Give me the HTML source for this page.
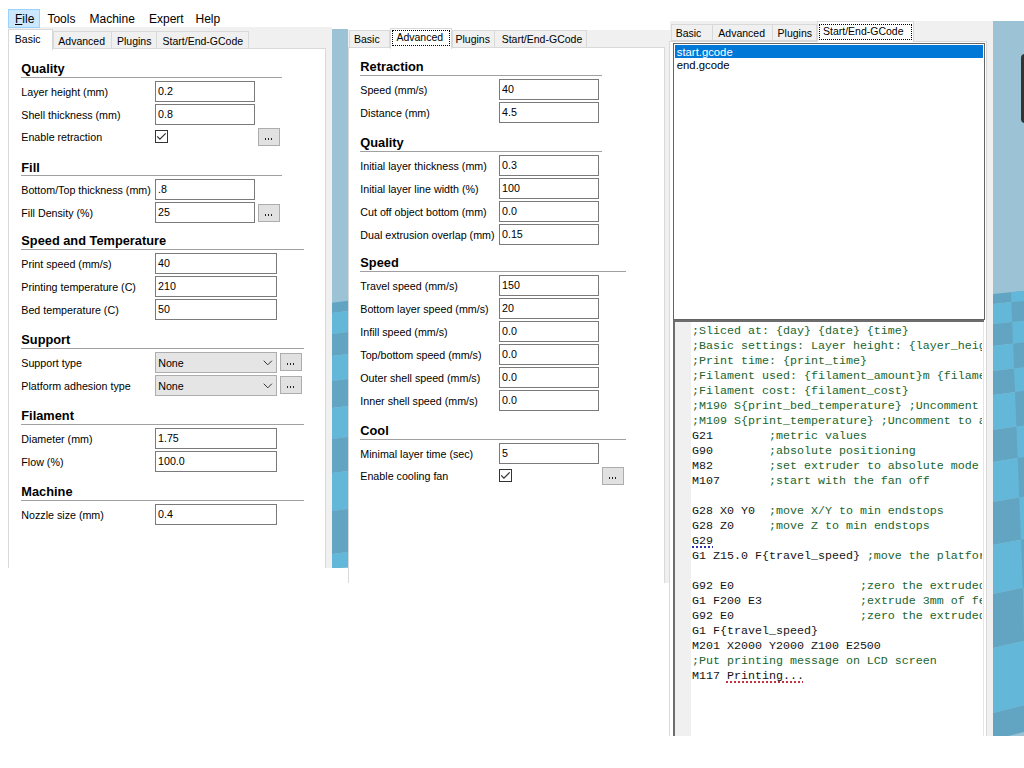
<!DOCTYPE html><html><head><meta charset="utf-8"><style>html,body{margin:0;padding:0;width:1024px;height:768px;overflow:hidden;background:#fff;position:relative;font-family:"Liberation Sans",sans-serif}</style></head><body>
<div style="position:absolute;left:8px;top:27px;width:324px;height:541px;background:#f0f0f0"></div>
<div style="position:absolute;left:8px;top:9px;width:32px;height:19px;background:#cce8ff;border:1px solid #99d1ff;box-sizing:border-box"></div>
<div style="position:absolute;left:15px;top:8.84px;line-height:20px;font-size:12px;font-weight:normal;color:#000;white-space:pre;font-family:'Liberation Sans', sans-serif;"><u>F</u>ile</div>
<div style="position:absolute;left:47.4px;top:8.84px;line-height:20px;font-size:12px;font-weight:normal;color:#000;white-space:pre;font-family:'Liberation Sans', sans-serif;">Tools</div>
<div style="position:absolute;left:89.5px;top:8.84px;line-height:20px;font-size:12px;font-weight:normal;color:#000;white-space:pre;font-family:'Liberation Sans', sans-serif;">Machine</div>
<div style="position:absolute;left:149px;top:8.84px;line-height:20px;font-size:12px;font-weight:normal;color:#000;white-space:pre;font-family:'Liberation Sans', sans-serif;">Expert</div>
<div style="position:absolute;left:195.5px;top:8.84px;line-height:20px;font-size:12px;font-weight:normal;color:#000;white-space:pre;font-family:'Liberation Sans', sans-serif;">Help</div>
<div style="position:absolute;left:8px;top:48px;width:318px;height:520px;background:#fff;border:1px solid #d9d9d9;border-bottom:none;box-sizing:border-box"></div>
<div style="position:absolute;left:8px;top:29px;width:45px;height:21px;background:#fff;border:1px solid #d9d9d9;border-bottom:none;box-sizing:border-box;z-index:2"></div>
<div style="position:absolute;left:14.8px;top:29.11px;line-height:20px;font-size:10.5px;font-weight:normal;color:#000;white-space:pre;font-family:'Liberation Sans', sans-serif;z-index:3">Basic</div>
<div style="position:absolute;left:53px;top:31px;width:59px;height:18px;background:#f0f0f0;border:1px solid #d9d9d9;box-sizing:border-box"></div>
<div style="position:absolute;left:58.3px;top:30.86px;line-height:20px;font-size:10.5px;font-weight:normal;color:#000;white-space:pre;font-family:'Liberation Sans', sans-serif;z-index:3">Advanced</div>
<div style="position:absolute;left:111px;top:31px;width:46px;height:18px;background:#f0f0f0;border:1px solid #d9d9d9;box-sizing:border-box"></div>
<div style="position:absolute;left:117px;top:30.86px;line-height:20px;font-size:10.5px;font-weight:normal;color:#000;white-space:pre;font-family:'Liberation Sans', sans-serif;z-index:3">Plugins</div>
<div style="position:absolute;left:156px;top:31px;width:93px;height:18px;background:#f0f0f0;border:1px solid #d9d9d9;box-sizing:border-box"></div>
<div style="position:absolute;left:162.6px;top:30.86px;line-height:20px;font-size:10.5px;font-weight:normal;color:#000;white-space:pre;font-family:'Liberation Sans', sans-serif;z-index:3">Start/End-GCode</div>
<div style="position:absolute;left:21.3px;top:58.86px;line-height:20px;font-size:12.8px;font-weight:bold;color:#000;white-space:pre;font-family:'Liberation Sans', sans-serif;">Quality</div>
<div style="position:absolute;left:21.3px;top:77px;width:260.7px;height:1px;background:#a0a0a0"></div>
<div style="position:absolute;left:21.3px;top:81.79px;line-height:20px;font-size:10.7px;font-weight:normal;color:#000;white-space:pre;font-family:'Liberation Sans', sans-serif;">Layer height (mm)</div>
<div style="position:absolute;left:155px;top:81px;width:100px;height:21px;background:#fff;border:1px solid #7a7a7a;box-sizing:border-box"></div>
<div style="position:absolute;left:158px;top:80.99px;line-height:20px;font-size:10.7px;font-weight:normal;color:#000;white-space:pre;font-family:'Liberation Sans', sans-serif;">0.2</div>
<div style="position:absolute;left:21.3px;top:104.79px;line-height:20px;font-size:10.7px;font-weight:normal;color:#000;white-space:pre;font-family:'Liberation Sans', sans-serif;">Shell thickness (mm)</div>
<div style="position:absolute;left:155px;top:104px;width:100px;height:21px;background:#fff;border:1px solid #7a7a7a;box-sizing:border-box"></div>
<div style="position:absolute;left:158px;top:103.99px;line-height:20px;font-size:10.7px;font-weight:normal;color:#000;white-space:pre;font-family:'Liberation Sans', sans-serif;">0.8</div>
<div style="position:absolute;left:21.3px;top:126.89px;line-height:20px;font-size:10.7px;font-weight:normal;color:#000;white-space:pre;font-family:'Liberation Sans', sans-serif;">Enable retraction</div>
<svg style="position:absolute;left:155px;top:130px" width="13" height="13"><rect x="0.5" y="0.5" width="12" height="12" fill="#fff" stroke="#333"/><path d="M2.2 6.4 L4.9 9.1 L10.7 3.4" fill="none" stroke="#333" stroke-width="1.3"/></svg>
<div style="position:absolute;left:258px;top:128px;width:22px;height:18px;background:#e1e1e1;border:1px solid #adadad;box-sizing:border-box"></div>
<div style="position:absolute;left:265.3px;top:138px;width:1px;height:2px;background:#222"></div>
<div style="position:absolute;left:268.3px;top:138px;width:1px;height:2px;background:#222"></div>
<div style="position:absolute;left:271.3px;top:138px;width:1px;height:2px;background:#222"></div>
<div style="position:absolute;left:21.3px;top:157.56px;line-height:20px;font-size:12.8px;font-weight:bold;color:#000;white-space:pre;font-family:'Liberation Sans', sans-serif;">Fill</div>
<div style="position:absolute;left:21.3px;top:175px;width:260.7px;height:1px;background:#a0a0a0"></div>
<div style="position:absolute;left:21.3px;top:179.79px;line-height:20px;font-size:10.7px;font-weight:normal;color:#000;white-space:pre;font-family:'Liberation Sans', sans-serif;">Bottom/Top thickness (mm)</div>
<div style="position:absolute;left:155px;top:179px;width:100px;height:21px;background:#fff;border:1px solid #7a7a7a;box-sizing:border-box"></div>
<div style="position:absolute;left:158px;top:178.99px;line-height:20px;font-size:10.7px;font-weight:normal;color:#000;white-space:pre;font-family:'Liberation Sans', sans-serif;">.8</div>
<div style="position:absolute;left:21.3px;top:202.79px;line-height:20px;font-size:10.7px;font-weight:normal;color:#000;white-space:pre;font-family:'Liberation Sans', sans-serif;">Fill Density (%)</div>
<div style="position:absolute;left:155px;top:202px;width:100px;height:21px;background:#fff;border:1px solid #7a7a7a;box-sizing:border-box"></div>
<div style="position:absolute;left:158px;top:201.99px;line-height:20px;font-size:10.7px;font-weight:normal;color:#000;white-space:pre;font-family:'Liberation Sans', sans-serif;">25</div>
<div style="position:absolute;left:258px;top:203.5px;width:22px;height:18px;background:#e1e1e1;border:1px solid #adadad;box-sizing:border-box"></div>
<div style="position:absolute;left:265.3px;top:213.5px;width:1px;height:2px;background:#222"></div>
<div style="position:absolute;left:268.3px;top:213.5px;width:1px;height:2px;background:#222"></div>
<div style="position:absolute;left:271.3px;top:213.5px;width:1px;height:2px;background:#222"></div>
<div style="position:absolute;left:21.3px;top:231.06px;line-height:20px;font-size:12.8px;font-weight:bold;color:#000;white-space:pre;font-family:'Liberation Sans', sans-serif;">Speed and Temperature</div>
<div style="position:absolute;left:21.3px;top:249px;width:282.7px;height:1px;background:#a0a0a0"></div>
<div style="position:absolute;left:21.3px;top:253.79px;line-height:20px;font-size:10.7px;font-weight:normal;color:#000;white-space:pre;font-family:'Liberation Sans', sans-serif;">Print speed (mm/s)</div>
<div style="position:absolute;left:155px;top:253px;width:122px;height:21px;background:#fff;border:1px solid #7a7a7a;box-sizing:border-box"></div>
<div style="position:absolute;left:158px;top:252.99px;line-height:20px;font-size:10.7px;font-weight:normal;color:#000;white-space:pre;font-family:'Liberation Sans', sans-serif;">40</div>
<div style="position:absolute;left:21.3px;top:276.79px;line-height:20px;font-size:10.7px;font-weight:normal;color:#000;white-space:pre;font-family:'Liberation Sans', sans-serif;">Printing temperature (C)</div>
<div style="position:absolute;left:155px;top:276px;width:122px;height:21px;background:#fff;border:1px solid #7a7a7a;box-sizing:border-box"></div>
<div style="position:absolute;left:158px;top:275.99px;line-height:20px;font-size:10.7px;font-weight:normal;color:#000;white-space:pre;font-family:'Liberation Sans', sans-serif;">210</div>
<div style="position:absolute;left:21.3px;top:299.79px;line-height:20px;font-size:10.7px;font-weight:normal;color:#000;white-space:pre;font-family:'Liberation Sans', sans-serif;">Bed temperature (C)</div>
<div style="position:absolute;left:155px;top:299px;width:122px;height:21px;background:#fff;border:1px solid #7a7a7a;box-sizing:border-box"></div>
<div style="position:absolute;left:158px;top:298.99px;line-height:20px;font-size:10.7px;font-weight:normal;color:#000;white-space:pre;font-family:'Liberation Sans', sans-serif;">50</div>
<div style="position:absolute;left:21.3px;top:330.06px;line-height:20px;font-size:12.8px;font-weight:bold;color:#000;white-space:pre;font-family:'Liberation Sans', sans-serif;">Support</div>
<div style="position:absolute;left:21.3px;top:348px;width:282.7px;height:1px;background:#a0a0a0"></div>
<div style="position:absolute;left:21.3px;top:352.79px;line-height:20px;font-size:10.7px;font-weight:normal;color:#000;white-space:pre;font-family:'Liberation Sans', sans-serif;">Support type</div>
<div style="position:absolute;left:155px;top:352px;width:122px;height:21px;background:#e5e5e5;border:1px solid #adadad;box-sizing:border-box"></div>
<div style="position:absolute;left:158.2px;top:352.79px;line-height:20px;font-size:10.7px;font-weight:normal;color:#000;white-space:pre;font-family:'Liberation Sans', sans-serif;">None</div>
<svg style="position:absolute;left:263px;top:360px" width="10" height="6"><path d="M0.7 0.7 L4.8 4.8 L8.9 0.7" fill="none" stroke="#333" stroke-width="1"/></svg>
<div style="position:absolute;left:280px;top:353px;width:22px;height:18px;background:#e1e1e1;border:1px solid #adadad;box-sizing:border-box"></div>
<div style="position:absolute;left:287.3px;top:363px;width:1px;height:2px;background:#222"></div>
<div style="position:absolute;left:290.3px;top:363px;width:1px;height:2px;background:#222"></div>
<div style="position:absolute;left:293.3px;top:363px;width:1px;height:2px;background:#222"></div>
<div style="position:absolute;left:21.3px;top:375.79px;line-height:20px;font-size:10.7px;font-weight:normal;color:#000;white-space:pre;font-family:'Liberation Sans', sans-serif;">Platform adhesion type</div>
<div style="position:absolute;left:155px;top:375px;width:122px;height:21px;background:#e5e5e5;border:1px solid #adadad;box-sizing:border-box"></div>
<div style="position:absolute;left:158.2px;top:375.79px;line-height:20px;font-size:10.7px;font-weight:normal;color:#000;white-space:pre;font-family:'Liberation Sans', sans-serif;">None</div>
<svg style="position:absolute;left:263px;top:383px" width="10" height="6"><path d="M0.7 0.7 L4.8 4.8 L8.9 0.7" fill="none" stroke="#333" stroke-width="1"/></svg>
<div style="position:absolute;left:280px;top:376px;width:22px;height:18px;background:#e1e1e1;border:1px solid #adadad;box-sizing:border-box"></div>
<div style="position:absolute;left:287.3px;top:386px;width:1px;height:2px;background:#222"></div>
<div style="position:absolute;left:290.3px;top:386px;width:1px;height:2px;background:#222"></div>
<div style="position:absolute;left:293.3px;top:386px;width:1px;height:2px;background:#222"></div>
<div style="position:absolute;left:21.3px;top:406.06px;line-height:20px;font-size:12.8px;font-weight:bold;color:#000;white-space:pre;font-family:'Liberation Sans', sans-serif;">Filament</div>
<div style="position:absolute;left:21.3px;top:424px;width:282.7px;height:1px;background:#a0a0a0"></div>
<div style="position:absolute;left:21.3px;top:428.79px;line-height:20px;font-size:10.7px;font-weight:normal;color:#000;white-space:pre;font-family:'Liberation Sans', sans-serif;">Diameter (mm)</div>
<div style="position:absolute;left:155px;top:428px;width:122px;height:21px;background:#fff;border:1px solid #7a7a7a;box-sizing:border-box"></div>
<div style="position:absolute;left:158px;top:427.99px;line-height:20px;font-size:10.7px;font-weight:normal;color:#000;white-space:pre;font-family:'Liberation Sans', sans-serif;">1.75</div>
<div style="position:absolute;left:21.3px;top:451.79px;line-height:20px;font-size:10.7px;font-weight:normal;color:#000;white-space:pre;font-family:'Liberation Sans', sans-serif;">Flow (%)</div>
<div style="position:absolute;left:155px;top:451px;width:122px;height:21px;background:#fff;border:1px solid #7a7a7a;box-sizing:border-box"></div>
<div style="position:absolute;left:158px;top:450.99px;line-height:20px;font-size:10.7px;font-weight:normal;color:#000;white-space:pre;font-family:'Liberation Sans', sans-serif;">100.0</div>
<div style="position:absolute;left:21.3px;top:482.06px;line-height:20px;font-size:12.8px;font-weight:bold;color:#000;white-space:pre;font-family:'Liberation Sans', sans-serif;">Machine</div>
<div style="position:absolute;left:21.3px;top:500px;width:282.7px;height:1px;background:#a0a0a0"></div>
<div style="position:absolute;left:21.3px;top:504.79px;line-height:20px;font-size:10.7px;font-weight:normal;color:#000;white-space:pre;font-family:'Liberation Sans', sans-serif;">Nozzle size (mm)</div>
<div style="position:absolute;left:155px;top:504px;width:122px;height:21px;background:#fff;border:1px solid #7a7a7a;box-sizing:border-box"></div>
<div style="position:absolute;left:158px;top:503.99px;line-height:20px;font-size:10.7px;font-weight:normal;color:#000;white-space:pre;font-family:'Liberation Sans', sans-serif;">0.4</div>
<svg style="position:absolute;left:332px;top:29px" width="16" height="539"><rect width="16" height="539" fill="#9bc3d5"/><polygon points="0,273.7 16,271.7 16,282 0,284" fill="#62a5c2"/><polygon points="0,284 16,282 16,303 0,305" fill="#63b7d8"/><polygon points="0,305 16,303 16,325 0,327" fill="#62a5c2"/><polygon points="0,327 16,325 16,350 0,352" fill="#63b7d8"/><polygon points="0,352 16,350 16,377 0,379" fill="#62a5c2"/><polygon points="0,379 16,377 16,408 0,410" fill="#63b7d8"/><polygon points="0,410 16,408 16,442 0,444" fill="#62a5c2"/><polygon points="0,444 16,442 16,480 0,482" fill="#63b7d8"/><polygon points="0,482 16,480 16,523 0,525" fill="#62a5c2"/><polygon points="0,525 16,523 16,538 0,540" fill="#63b7d8"/></svg>
<div style="position:absolute;left:348px;top:30px;width:322px;height:553px;background:#f0f0f0"></div>
<div style="position:absolute;left:348px;top:47px;width:317px;height:536px;background:#fff;border:1px solid #d9d9d9;border-bottom:none;box-sizing:border-box"></div>
<div style="position:absolute;left:349px;top:30px;width:41px;height:18px;background:#f0f0f0;border:1px solid #d9d9d9;box-sizing:border-box"></div>
<div style="position:absolute;left:354px;top:29.11px;line-height:20px;font-size:10.5px;font-weight:normal;color:#000;white-space:pre;font-family:'Liberation Sans', sans-serif;z-index:3">Basic</div>
<div style="position:absolute;left:390px;top:28px;width:62px;height:21px;background:#fff;border:1px solid #d9d9d9;border-bottom:none;box-sizing:border-box;z-index:2"></div>
<div style="position:absolute;left:396.4px;top:27.16px;line-height:20px;font-size:10.5px;font-weight:normal;color:#000;white-space:pre;font-family:'Liberation Sans', sans-serif;z-index:3">Advanced</div>
<div style="position:absolute;left:452px;top:30px;width:43px;height:18px;background:#f0f0f0;border:1px solid #d9d9d9;box-sizing:border-box"></div>
<div style="position:absolute;left:455.5px;top:29.11px;line-height:20px;font-size:10.5px;font-weight:normal;color:#000;white-space:pre;font-family:'Liberation Sans', sans-serif;z-index:3">Plugins</div>
<div style="position:absolute;left:494px;top:30px;width:93px;height:18px;background:#f0f0f0;border:1px solid #d9d9d9;box-sizing:border-box"></div>
<div style="position:absolute;left:501.7px;top:29.11px;line-height:20px;font-size:10.5px;font-weight:normal;color:#000;white-space:pre;font-family:'Liberation Sans', sans-serif;z-index:3">Start/End-GCode</div>
<div style="position:absolute;left:392px;top:30px;width:58px;height:16px;border:1px dotted #000;box-sizing:border-box;z-index:4"></div>
<div style="position:absolute;left:360.3px;top:57.06px;line-height:20px;font-size:12.8px;font-weight:bold;color:#000;white-space:pre;font-family:'Liberation Sans', sans-serif;">Retraction</div>
<div style="position:absolute;left:360.3px;top:75px;width:241.7px;height:1px;background:#a0a0a0"></div>
<div style="position:absolute;left:360.3px;top:79.79px;line-height:20px;font-size:10.7px;font-weight:normal;color:#000;white-space:pre;font-family:'Liberation Sans', sans-serif;">Speed (mm/s)</div>
<div style="position:absolute;left:499px;top:79px;width:100px;height:21px;background:#fff;border:1px solid #7a7a7a;box-sizing:border-box"></div>
<div style="position:absolute;left:502px;top:78.99px;line-height:20px;font-size:10.7px;font-weight:normal;color:#000;white-space:pre;font-family:'Liberation Sans', sans-serif;">40</div>
<div style="position:absolute;left:360.3px;top:102.79px;line-height:20px;font-size:10.7px;font-weight:normal;color:#000;white-space:pre;font-family:'Liberation Sans', sans-serif;">Distance (mm)</div>
<div style="position:absolute;left:499px;top:102px;width:100px;height:21px;background:#fff;border:1px solid #7a7a7a;box-sizing:border-box"></div>
<div style="position:absolute;left:502px;top:101.99px;line-height:20px;font-size:10.7px;font-weight:normal;color:#000;white-space:pre;font-family:'Liberation Sans', sans-serif;">4.5</div>
<div style="position:absolute;left:360.3px;top:132.56px;line-height:20px;font-size:12.8px;font-weight:bold;color:#000;white-space:pre;font-family:'Liberation Sans', sans-serif;">Quality</div>
<div style="position:absolute;left:360.3px;top:151px;width:241.7px;height:1px;background:#a0a0a0"></div>
<div style="position:absolute;left:360.3px;top:155.79px;line-height:20px;font-size:10.7px;font-weight:normal;color:#000;white-space:pre;font-family:'Liberation Sans', sans-serif;">Initial layer thickness (mm)</div>
<div style="position:absolute;left:499px;top:155px;width:100px;height:21px;background:#fff;border:1px solid #7a7a7a;box-sizing:border-box"></div>
<div style="position:absolute;left:502px;top:154.99px;line-height:20px;font-size:10.7px;font-weight:normal;color:#000;white-space:pre;font-family:'Liberation Sans', sans-serif;">0.3</div>
<div style="position:absolute;left:360.3px;top:178.79px;line-height:20px;font-size:10.7px;font-weight:normal;color:#000;white-space:pre;font-family:'Liberation Sans', sans-serif;">Initial layer line width (%)</div>
<div style="position:absolute;left:499px;top:178px;width:100px;height:21px;background:#fff;border:1px solid #7a7a7a;box-sizing:border-box"></div>
<div style="position:absolute;left:502px;top:177.99px;line-height:20px;font-size:10.7px;font-weight:normal;color:#000;white-space:pre;font-family:'Liberation Sans', sans-serif;">100</div>
<div style="position:absolute;left:360.3px;top:201.79px;line-height:20px;font-size:10.7px;font-weight:normal;color:#000;white-space:pre;font-family:'Liberation Sans', sans-serif;">Cut off object bottom (mm)</div>
<div style="position:absolute;left:499px;top:201px;width:100px;height:21px;background:#fff;border:1px solid #7a7a7a;box-sizing:border-box"></div>
<div style="position:absolute;left:502px;top:200.99px;line-height:20px;font-size:10.7px;font-weight:normal;color:#000;white-space:pre;font-family:'Liberation Sans', sans-serif;">0.0</div>
<div style="position:absolute;left:360.3px;top:224.79px;line-height:20px;font-size:10.7px;font-weight:normal;color:#000;white-space:pre;font-family:'Liberation Sans', sans-serif;">Dual extrusion overlap (mm)</div>
<div style="position:absolute;left:499px;top:224px;width:100px;height:21px;background:#fff;border:1px solid #7a7a7a;box-sizing:border-box"></div>
<div style="position:absolute;left:502px;top:223.99px;line-height:20px;font-size:10.7px;font-weight:normal;color:#000;white-space:pre;font-family:'Liberation Sans', sans-serif;">0.15</div>
<div style="position:absolute;left:360.3px;top:253.06px;line-height:20px;font-size:12.8px;font-weight:bold;color:#000;white-space:pre;font-family:'Liberation Sans', sans-serif;">Speed</div>
<div style="position:absolute;left:360.3px;top:271px;width:265.7px;height:1px;background:#a0a0a0"></div>
<div style="position:absolute;left:360.3px;top:275.79px;line-height:20px;font-size:10.7px;font-weight:normal;color:#000;white-space:pre;font-family:'Liberation Sans', sans-serif;">Travel speed (mm/s)</div>
<div style="position:absolute;left:499px;top:275px;width:100px;height:21px;background:#fff;border:1px solid #7a7a7a;box-sizing:border-box"></div>
<div style="position:absolute;left:502px;top:274.99px;line-height:20px;font-size:10.7px;font-weight:normal;color:#000;white-space:pre;font-family:'Liberation Sans', sans-serif;">150</div>
<div style="position:absolute;left:360.3px;top:298.79px;line-height:20px;font-size:10.7px;font-weight:normal;color:#000;white-space:pre;font-family:'Liberation Sans', sans-serif;">Bottom layer speed (mm/s)</div>
<div style="position:absolute;left:499px;top:298px;width:100px;height:21px;background:#fff;border:1px solid #7a7a7a;box-sizing:border-box"></div>
<div style="position:absolute;left:502px;top:297.99px;line-height:20px;font-size:10.7px;font-weight:normal;color:#000;white-space:pre;font-family:'Liberation Sans', sans-serif;">20</div>
<div style="position:absolute;left:360.3px;top:321.79px;line-height:20px;font-size:10.7px;font-weight:normal;color:#000;white-space:pre;font-family:'Liberation Sans', sans-serif;">Infill speed (mm/s)</div>
<div style="position:absolute;left:499px;top:321px;width:100px;height:21px;background:#fff;border:1px solid #7a7a7a;box-sizing:border-box"></div>
<div style="position:absolute;left:502px;top:320.99px;line-height:20px;font-size:10.7px;font-weight:normal;color:#000;white-space:pre;font-family:'Liberation Sans', sans-serif;">0.0</div>
<div style="position:absolute;left:360.3px;top:344.79px;line-height:20px;font-size:10.7px;font-weight:normal;color:#000;white-space:pre;font-family:'Liberation Sans', sans-serif;">Top/bottom speed (mm/s)</div>
<div style="position:absolute;left:499px;top:344px;width:100px;height:21px;background:#fff;border:1px solid #7a7a7a;box-sizing:border-box"></div>
<div style="position:absolute;left:502px;top:343.99px;line-height:20px;font-size:10.7px;font-weight:normal;color:#000;white-space:pre;font-family:'Liberation Sans', sans-serif;">0.0</div>
<div style="position:absolute;left:360.3px;top:367.79px;line-height:20px;font-size:10.7px;font-weight:normal;color:#000;white-space:pre;font-family:'Liberation Sans', sans-serif;">Outer shell speed (mm/s)</div>
<div style="position:absolute;left:499px;top:367px;width:100px;height:21px;background:#fff;border:1px solid #7a7a7a;box-sizing:border-box"></div>
<div style="position:absolute;left:502px;top:366.99px;line-height:20px;font-size:10.7px;font-weight:normal;color:#000;white-space:pre;font-family:'Liberation Sans', sans-serif;">0.0</div>
<div style="position:absolute;left:360.3px;top:390.79px;line-height:20px;font-size:10.7px;font-weight:normal;color:#000;white-space:pre;font-family:'Liberation Sans', sans-serif;">Inner shell speed (mm/s)</div>
<div style="position:absolute;left:499px;top:390px;width:100px;height:21px;background:#fff;border:1px solid #7a7a7a;box-sizing:border-box"></div>
<div style="position:absolute;left:502px;top:389.99px;line-height:20px;font-size:10.7px;font-weight:normal;color:#000;white-space:pre;font-family:'Liberation Sans', sans-serif;">0.0</div>
<div style="position:absolute;left:360.3px;top:420.56px;line-height:20px;font-size:12.8px;font-weight:bold;color:#000;white-space:pre;font-family:'Liberation Sans', sans-serif;">Cool</div>
<div style="position:absolute;left:360.3px;top:439px;width:265.7px;height:1px;background:#a0a0a0"></div>
<div style="position:absolute;left:360.3px;top:443.79px;line-height:20px;font-size:10.7px;font-weight:normal;color:#000;white-space:pre;font-family:'Liberation Sans', sans-serif;">Minimal layer time (sec)</div>
<div style="position:absolute;left:499px;top:443px;width:100px;height:21px;background:#fff;border:1px solid #7a7a7a;box-sizing:border-box"></div>
<div style="position:absolute;left:502px;top:442.99px;line-height:20px;font-size:10.7px;font-weight:normal;color:#000;white-space:pre;font-family:'Liberation Sans', sans-serif;">5</div>
<div style="position:absolute;left:360.3px;top:466.29px;line-height:20px;font-size:10.7px;font-weight:normal;color:#000;white-space:pre;font-family:'Liberation Sans', sans-serif;">Enable cooling fan</div>
<svg style="position:absolute;left:499px;top:469px" width="13" height="13"><rect x="0.5" y="0.5" width="12" height="12" fill="#fff" stroke="#333"/><path d="M2.2 6.4 L4.9 9.1 L10.7 3.4" fill="none" stroke="#333" stroke-width="1.3"/></svg>
<div style="position:absolute;left:602px;top:467px;width:22px;height:18px;background:#e1e1e1;border:1px solid #adadad;box-sizing:border-box"></div>
<div style="position:absolute;left:609.3px;top:477px;width:1px;height:2px;background:#222"></div>
<div style="position:absolute;left:612.3px;top:477px;width:1px;height:2px;background:#222"></div>
<div style="position:absolute;left:615.3px;top:477px;width:1px;height:2px;background:#222"></div>
<div style="position:absolute;left:670px;top:21px;width:323px;height:715px;background:#f0f0f0"></div>
<div style="position:absolute;left:669px;top:41px;width:318px;height:695px;background:#fff;border:1px solid #d9d9d9;border-bottom:none;box-sizing:border-box"></div>
<div style="position:absolute;left:671px;top:23.6px;width:42px;height:17.9px;background:#f0f0f0;border:1px solid #d9d9d9;box-sizing:border-box"></div>
<div style="position:absolute;left:675.7px;top:22.86px;line-height:20px;font-size:10.5px;font-weight:normal;color:#000;white-space:pre;font-family:'Liberation Sans', sans-serif;z-index:3">Basic</div>
<div style="position:absolute;left:712px;top:23.6px;width:61px;height:17.9px;background:#f0f0f0;border:1px solid #d9d9d9;box-sizing:border-box"></div>
<div style="position:absolute;left:718.3px;top:22.86px;line-height:20px;font-size:10.5px;font-weight:normal;color:#000;white-space:pre;font-family:'Liberation Sans', sans-serif;z-index:3">Advanced</div>
<div style="position:absolute;left:772px;top:23.6px;width:45px;height:17.9px;background:#f0f0f0;border:1px solid #d9d9d9;box-sizing:border-box"></div>
<div style="position:absolute;left:777.6px;top:22.86px;line-height:20px;font-size:10.5px;font-weight:normal;color:#000;white-space:pre;font-family:'Liberation Sans', sans-serif;z-index:3">Plugins</div>
<div style="position:absolute;left:817px;top:21.3px;width:97px;height:21.2px;background:#fff;border:1px solid #d9d9d9;border-bottom:none;box-sizing:border-box;z-index:2"></div>
<div style="position:absolute;left:823px;top:20.76px;line-height:20px;font-size:10.5px;font-weight:normal;color:#000;white-space:pre;font-family:'Liberation Sans', sans-serif;z-index:3">Start/End-GCode</div>
<div style="position:absolute;left:819px;top:24px;width:93px;height:16px;border:1px dotted #000;box-sizing:border-box;z-index:4"></div>
<div style="position:absolute;left:673px;top:43px;width:312px;height:277px;background:#fff;border:1px solid #646464;box-sizing:border-box"></div>
<div style="position:absolute;left:675px;top:45px;width:308px;height:13px;background:#0078d7"></div>
<div style="position:absolute;left:676.8px;top:41.88px;line-height:20px;font-size:11.3px;font-weight:normal;color:#fff;white-space:pre;font-family:'Liberation Sans', sans-serif;">start.gcode</div>
<div style="position:absolute;left:676.8px;top:54.88px;line-height:20px;font-size:11.3px;font-weight:normal;color:#000;white-space:pre;font-family:'Liberation Sans', sans-serif;">end.gcode</div>
<div style="position:absolute;left:673px;top:320px;width:311px;height:416px;background:#fff;border-left:2px solid #6d6d6d;border-top:2px solid #6d6d6d;box-sizing:border-box"></div>
<div style="position:absolute;left:675px;top:322px;width:16px;height:414px;background:#f0f0f0"></div>
<div style="position:absolute;left:692px;top:324px;width:290px;height:412px;overflow:hidden;font-family:'Liberation Mono',monospace;font-size:11.67px;line-height:15px;white-space:pre;color:#000"><div style="height:15px"><span style="color:#20652e">;Sliced at: {day} {date} {time}</span></div><div style="height:15px"><span style="color:#20652e">;Basic settings: Layer height: {layer_height} Walls: {wall_thickness} Fill: {fill_density}</span></div><div style="height:15px"><span style="color:#20652e">;Print time: {print_time}</span></div><div style="height:15px"><span style="color:#20652e">;Filament used: {filament_amount}m {filament_weight}g</span></div><div style="height:15px"><span style="color:#20652e">;Filament cost: {filament_cost}</span></div><div style="height:15px"><span style="color:#20652e">;M190 S{print_bed_temperature} ;Uncomment to add your own bed temperature line</span></div><div style="height:15px"><span style="color:#20652e">;M109 S{print_temperature} ;Uncomment to add your own temperature line</span></div><div style="height:15px"><span style="color:#141414">G21        </span><span style="color:#20652e">;metric values</span></div><div style="height:15px"><span style="color:#141414">G90        </span><span style="color:#20652e">;absolute positioning</span></div><div style="height:15px"><span style="color:#141414">M82        </span><span style="color:#20652e">;set extruder to absolute mode</span></div><div style="height:15px"><span style="color:#141414">M107       </span><span style="color:#20652e">;start with the fan off</span></div><div style="height:15px">&nbsp;</div><div style="height:15px"><span style="color:#141414">G28 X0 Y0  </span><span style="color:#20652e">;move X/Y to min endstops</span></div><div style="height:15px"><span style="color:#141414">G28 Z0     </span><span style="color:#20652e">;move Z to min endstops</span></div><div style="height:15px"><span style="color:#141414"><span style="text-decoration:underline dotted #3030b0;text-decoration-thickness:1.5px;text-underline-offset:2px">G29</span></span></div><div style="height:15px"><span style="color:#141414">G1 Z15.0 F{travel_speed} </span><span style="color:#20652e">;move the platform down 15mm</span></div><div style="height:15px">&nbsp;</div><div style="height:15px"><span style="color:#141414">G92 E0                  </span><span style="color:#20652e">;zero the extruded length</span></div><div style="height:15px"><span style="color:#141414">G1 F200 E3              </span><span style="color:#20652e">;extrude 3mm of feed stock</span></div><div style="height:15px"><span style="color:#141414">G92 E0                  </span><span style="color:#20652e">;zero the extruded length again</span></div><div style="height:15px"><span style="color:#141414">G1 F{travel_speed}</span></div><div style="height:15px"><span style="color:#141414">M201 X2000 Y2000 Z100 E2500</span></div><div style="height:15px"><span style="color:#20652e">;Put printing message on LCD screen</span></div><div style="height:15px"><span style="color:#141414">M117 <span style="text-decoration:underline dotted #c03040;text-decoration-thickness:1.5px;text-underline-offset:2px">Printing...</span></span></div></div>
<div style="position:absolute;left:984px;top:322px;width:2px;height:414px;background:#fff"></div>
<div style="position:absolute;left:983px;top:322px;width:1px;height:414px;background:#e6e6e6"></div>
<svg style="position:absolute;left:993px;top:21px" width="31" height="715"><rect width="31" height="715" fill="#9bc3d5"/><polygon points="0,273 31,270.0 31,279.8868778280543 0,283" fill="#62a5c2"/><polygon points="18.0,271.258064516129 31,270.0 31,279.8868778280543 18.397727272727252,281.15243959076975" fill="#63b7d8"/><polygon points="0,283 31,279.8868778280543 31,299.6606334841629 0,303" fill="#63b7d8"/><polygon points="18.397727272727252,281.15243959076975 31,279.8868778280543 31,299.6606334841629 19.19318181818187,300.93248165496743" fill="#62a5c2"/><polygon points="0,303 31,299.6606334841629 31,321.4117647058824 0,325" fill="#62a5c2"/><polygon points="19.19318181818187,300.93248165496743 31,299.6606334841629 31,321.4117647058824 20.06818181818187,322.6771174745558" fill="#63b7d8"/><polygon points="0,325 31,321.4117647058824 31,346.1289592760181 0,350" fill="#63b7d8"/><polygon points="20.06818181818187,322.6771174745558 31,321.4117647058824 31,346.1289592760181 21.0625,347.36987757261716" fill="#62a5c2"/><polygon points="0,350 31,346.1289592760181 31,369.8574660633484 0,374" fill="#62a5c2"/><polygon points="21.0625,347.36987757261716 31,346.1289592760181 31,369.8574660633484 22.017045454545496,371.05785941999176" fill="#63b7d8"/><polygon points="0,374 31,369.8574660633484 31,404.46153846153845 0,409" fill="#63b7d8"/><polygon points="22.017045454545496,371.05785941999176 31,369.8574660633484 31,404.46153846153845 23.409090909090878,405.5728626212497" fill="#62a5c2"/><polygon points="0,409 31,404.46153846153845 31,436.0995475113122 0,441" fill="#62a5c2"/><polygon points="23.409090909090878,405.5728626212497 31,404.46153846153845 31,436.0995475113122 24.68181818181813,437.09832008598613" fill="#63b7d8"/><polygon points="0,441 31,436.0995475113122 31,475.6470588235294 0,481" fill="#63b7d8"/><polygon points="24.68181818181813,437.09832008598613 31,436.0995475113122 31,475.6470588235294 26.272727272727252,476.4633431085044" fill="#62a5c2"/><polygon points="0,481 31,475.6470588235294 31,518.1606334841629 0,524" fill="#62a5c2"/><polygon points="26.272727272727252,476.4633431085044 31,475.6470588235294 31,518.1606334841629 27.982954545454504,518.7289442649381" fill="#63b7d8"/><polygon points="0,524 31,518.1606334841629 31,566.606334841629 0,573" fill="#63b7d8"/><polygon points="27.982954545454504,518.7289442649381 31,518.1606334841629 31,566.606334841629 29.93181818181813,566.8266444182004" fill="#62a5c2"/><polygon points="0,573 31,566.606334841629 31,619.9954751131222 0,627" fill="#62a5c2"/><polygon points="29.93181818181813,566.8266444182004 31,566.606334841629 31,619.9954751131222 31,619.9954751131222" fill="#63b7d8"/><polygon points="0,627 31,619.9954751131222 31,684.2601809954751 0,692" fill="#63b7d8"/><polygon points="0,692 31,684.2601809954751 31,710.9547511312218 0,719" fill="#62a5c2"/></svg>
<div style="position:absolute;left:1021px;top:54px;width:10px;height:69px;background:#333;border-radius:4px"></div>
</body></html>
